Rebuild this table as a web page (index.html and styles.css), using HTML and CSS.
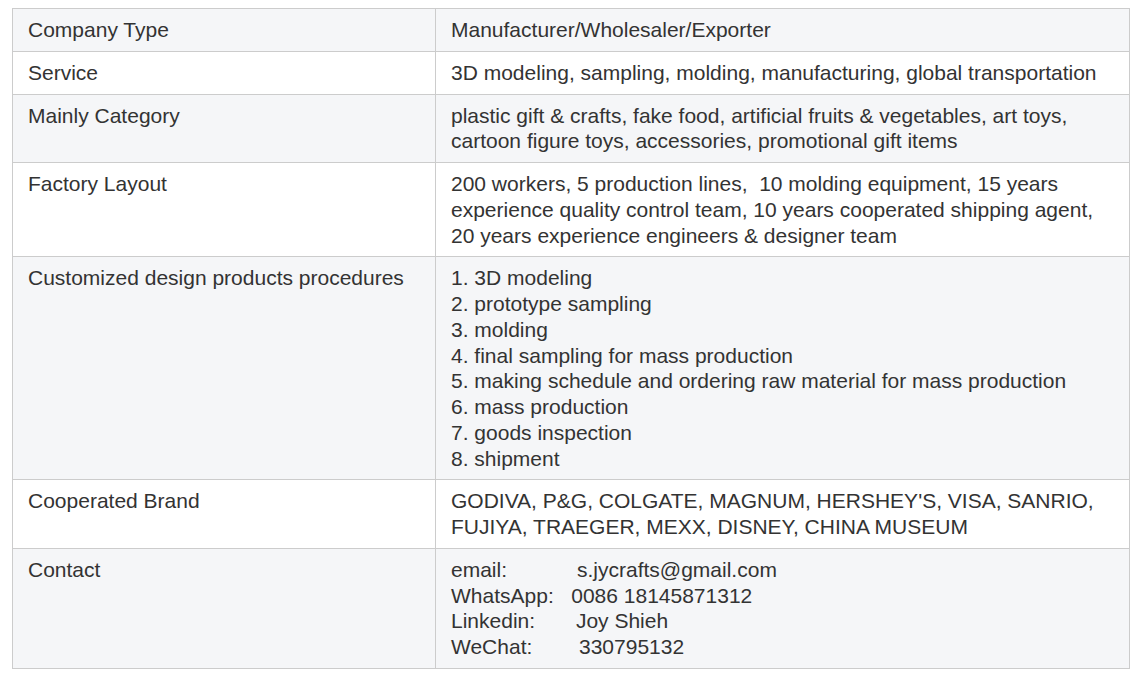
FILE: index.html
```html
<!DOCTYPE html>
<html>
<head>
<meta charset="utf-8">
<link rel="stylesheet" href="styles.css">
</head>
<body>
<table class="info">
<tbody>
<tr><td class="k">Company Type</td><td>Manufacturer/Wholesaler/Exporter</td></tr>
<tr><td class="k">Service</td><td>3D modeling, sampling, molding, manufacturing, global transportation</td></tr>
<tr><td class="k">Mainly Category</td><td>plastic gift &amp; crafts, fake food, artificial fruits &amp; vegetables, art toys, cartoon figure toys, accessories, promotional gift items</td></tr>
<tr><td class="k">Factory Layout</td><td>200 workers, 5 production lines,&nbsp; 10 molding equipment, 15 years experience quality control team, 10 years cooperated shipping agent, 20 years experience engineers &amp; designer team</td></tr>
<tr><td class="k">Customized design products procedures</td><td>1. 3D modeling<br>2. prototype sampling<br>3. molding<br>4. final sampling for mass production<br>5. making schedule and ordering raw material for mass production<br>6. mass production<br>7. goods inspection<br>8. shipment</td></tr>
<tr><td class="k">Cooperated Brand</td><td>GODIVA, P&amp;G, COLGATE, MAGNUM, HERSHEY'S, VISA, SANRIO, FUJIYA, TRAEGER, MEXX, DISNEY, CHINA MUSEUM</td></tr>
<tr><td class="k">Contact</td><td>email:&nbsp;&nbsp;&nbsp;&nbsp;&nbsp;&nbsp;&nbsp;&nbsp;&nbsp;&nbsp;&nbsp; s.jycrafts@gmail.com<br>WhatsApp:&nbsp;&nbsp; 0086 18145871312<br>Linkedin:&nbsp;&nbsp;&nbsp;&nbsp;&nbsp;&nbsp; Joy Shieh<br>WeChat:&nbsp;&nbsp;&nbsp;&nbsp;&nbsp;&nbsp;&nbsp; 330795132</td></tr>
</tbody>
</table>
</body>
</html>
```
FILE: styles.css
```css
html, body {
  margin: 0;
  padding: 0;
  background: #fff;
}
body {
  padding: 8px 12px;
  font-family: "Liberation Sans", Arial, sans-serif;
  font-size: 21px;
  line-height: 25.75px;
  color: #333;
}
.info {
  width: 1118px;
  border-collapse: collapse;
  border: 1px solid #ccc;
}
.info td {
  border: 1px solid #ccc;
  padding: 8px 15px 8px 15px;
  vertical-align: top;
  text-align: left;
}
.info td.k {
  width: 392px;
}
.info tr:nth-child(odd) td {
  background: #f5f6f8;
}
```
